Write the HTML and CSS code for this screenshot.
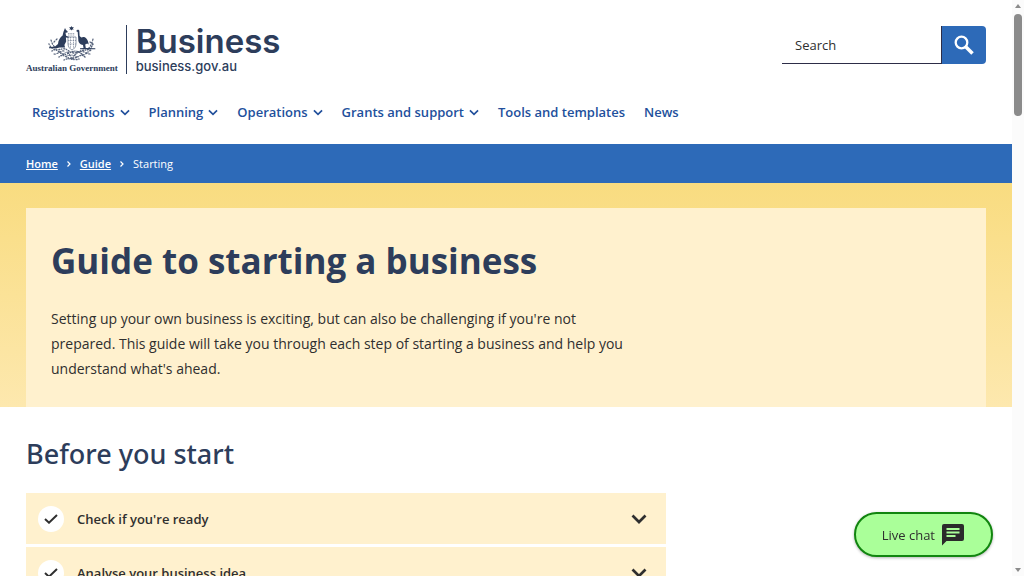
FILE: index.html
```html
<!DOCTYPE html>
<html lang="en">
<head>
    <meta charset="UTF-8">
    <meta name="viewport" content="width=device-width, initial-scale=1.0">
    <title>Guide to starting a business | business.gov.au</title>
    <link rel="stylesheet" href="styles.css">
</head>
<body>

    <!-- Shared icons -->
    <svg class="sprite" aria-hidden="true">
        <symbol id="chevron" viewBox="0 0 16 10">
            <path d="M1.500 1.500L8 8l6.500-6.500" fill="none" stroke="currentColor" stroke-width="2.700"/>
        </symbol>
        <symbol id="tick" viewBox="0 0 14 10">
            <path d="M1 5l4 3.700L13 1" fill="none" stroke="currentColor" stroke-width="2"/>
        </symbol>
    </svg>

    <div class="page">
        <div class="content">
            <header class="header">
                <div class="header-top">
                    <a class="logo" href="#">
                        <span class="crest">
                            <svg width="48" height="36" viewBox="0 0 48 36" aria-hidden="true">
                                <!-- star -->
                                <path d="M23.500 1l.7 1.300 1.600-.2-.9 1.300.9 1.200-1.600-.2-.7 1.200-.7-1.200-1.600.2.9-1.200-.9-1.300 1.600.2z"/>
                                <!-- kangaroo -->
                                <path d="M17 3l1 2 1.600 1.300-.2 1.200-1.900.3.600 3 2.600 1-.2.900-2.600-.2.300 4-1.800 3.500.7 2.500h-5.500l-3 .8H1v-1l6-.8 3-2.500c.3-4 2.200-6.500 4.600-8.500l.8-3.500z"/>
                                <!-- emu -->
                                <path d="M28 6l2-1.500 1.300 1 .3 5.500 1.700 1.500c3-1.800 6.700.5 7.400 7l-1.500-1-2 1 .6 3.500 9.500.3v1H32v-1l3.500-.3-.5-3c-2.500-.3-5-2.500-4.700-5.500l-.6-7.500z"/>
                                <!-- shield -->
                                <g fill="none" stroke="currentColor" opacity=".75">
                                    <path d="M20 12h8v7c0 3-2 5-4 6-2-1-4-3-4-6z" stroke-width=".7"/>
                                    <path d="M22.500 12v11M25.500 12v11M20 15.500h8M20 19h8M20 8.500h7M20 10h7" stroke-width=".6" stroke-dasharray="1.500 .8"/>
                                </g>
                                <!-- wattle -->
                                <g fill="none" stroke="currentColor" stroke-linecap="round" opacity=".8">
                                    <path d="M1 19c2 5 7 7 13 5s8 7 16 3 11 1 15-8M4 26c5-5 8 6 15 3s9-5 16 1c4-1 6-5 9-5M11 32c5-5 9 4 16 1s6-4 10-1M16 35c5-3 10 1 15-1" stroke-width="1.400" stroke-dasharray=".3 2 1 1.700"/>
                                    <path d="M3 15c1 3 2 6 5 8M45 14c-1 4-2 7-5 10M6 29c3 1 7-4 10-3M42 29c-4 0-6-4-11-2M20 27l4 7 5-7M9 14l-3 3M42 17l3 2" stroke-width="1.200" stroke-dasharray="1.300 1.800"/>
                                    <path d="M12 27l3 2 4-2 3 3M27 30l4-3 4 3M18 31l6-1 6 2" stroke-width=".7"/>
                                </g>
                            </svg>
                            <span class="crest-name">Australian Government</span>
                        </span>
                        <span class="brand">
                            <span class="brand-name">Business</span>
                            <span class="brand-url">business.gov.au</span>
                        </span>
                    </a>
                    <form class="search">
                        <input type="text" name="search" placeholder="Search" aria-label="Search">
                        <button type="submit" aria-label="Search">
                            <svg width="20" height="20" viewBox="0 0 20 20" aria-hidden="true">
                                <circle cx="7.500" cy="7.500" r="5.800" fill="none" stroke="currentColor" stroke-width="2.300"/>
                                <path d="M12 12l6.500 6.500" stroke="currentColor" stroke-width="3.500"/>
                            </svg>
                        </button>
                    </form>
                </div>
                <nav class="main-nav">
                    <a href="#">Registrations <svg><use href="#chevron"/></svg></a>
                    <a href="#">Planning <svg><use href="#chevron"/></svg></a>
                    <a href="#">Operations <svg><use href="#chevron"/></svg></a>
                    <a href="#">Grants and support <svg><use href="#chevron"/></svg></a>
                    <a href="#">Tools and templates</a>
                    <a href="#">News</a>
                </nav>
            </header>

            <nav class="breadcrumb" aria-label="Breadcrumb">
                <a href="#">Home</a>
                <svg width="4" height="6" viewBox="0 0 4 6" aria-hidden="true"><path d="M.5.500L3 3 .5 5.500" fill="none" stroke="currentColor" stroke-width="1.200"/></svg>
                <a href="#">Guide</a>
                <svg width="4" height="6" viewBox="0 0 4 6" aria-hidden="true"><path d="M.5.500L3 3 .5 5.500" fill="none" stroke="currentColor" stroke-width="1.200"/></svg>
                <span>Starting</span>
            </nav>

            <section class="hero">
                <div class="hero-card">
                    <h1>Guide to starting a business</h1>
                    <p>Setting up your own business is exciting, but can also be challenging if you're not prepared. This guide will take you through each step of starting a business and help you understand what's ahead.</p>
                </div>
            </section>

            <main class="main">
                <h2>Before you start</h2>
                <div class="accordion">
                    <button type="button" class="accordion-item">
                        <span class="tick"><svg><use href="#tick"/></svg></span>
                        <span class="accordion-title">Check if you're ready</span>
                        <svg class="arrow"><use href="#chevron"/></svg>
                    </button>
                    <button type="button" class="accordion-item">
                        <span class="tick"><svg><use href="#tick"/></svg></span>
                        <span class="accordion-title">Analyse your business idea</span>
                        <svg class="arrow"><use href="#chevron"/></svg>
                    </button>
                </div>
            </main>
        </div>

        <div class="scrollbar" aria-hidden="true">
            <span class="scroll-up"></span>
            <span class="scroll-thumb"></span>
            <span class="scroll-down"></span>
        </div>
    </div>

    <button type="button" class="live-chat">
        Live chat
        <svg width="22" height="22" viewBox="0 0 22 22" aria-hidden="true">
            <path d="M2 0h18a2 2 0 0 1 2 2v13a2 2 0 0 1-2 2H4.500L0 21.500V2a2 2 0 0 1 2-2z" fill="#2b2b2b"/>
            <path d="M4.500 5h13M4.500 8.500h13M4.500 12h9" stroke="#aaff99" stroke-width="2"/>
        </svg>
    </button>

</body>
</html>
```
FILE: styles.css
```css
* {
    box-sizing: border-box;
}
body {
    margin: 0;
    font-family: "Open Sans", sans-serif;
    color: #2f2f2f;
    background-color: white;
}
button, input {
    font-family: inherit;
    color: inherit;
}
button {
    cursor: pointer;
}
.sprite {
    display: none;
}
.page {
    display: grid;
    grid-template-columns: 1fr 12px;
    height: 100vh;
    overflow: hidden;
}
.content {
    overflow: hidden;
}

/* Header */
.header {
    padding: 25px 26px 22px;
}
.header-top {
    display: flex;
    justify-content: space-between;
    align-items: flex-start;
}
.logo {
    display: flex;
    color: #2d3d5b;
    text-decoration: none;
}
.crest {
    display: flex;
    flex-direction: column;
    align-items: center;
    gap: 1px;
    padding-right: 8px;
    border-right: 1px solid #2d3d5b;
}
.crest svg {
    fill: currentColor;
}
.crest-name {
    font: bold 9px/12px "Liberation Serif", serif;
    white-space: nowrap;
}
.brand {
    display: flex;
    flex-direction: column;
    padding-left: 9px;
    font-family: Inter, sans-serif;
}
.brand-name {
    font-size: 33px;
    font-weight: 600;
    line-height: 33px;
}
.brand-url {
    font-size: 13px;
    font-weight: 500;
    line-height: 16px;
}
.search {
    display: flex;
    width: 204px;
    height: 38px;
    margin-top: 1px;
}
.search input {
    flex: 1;
    min-width: 0;
    padding: 0 13px;
    border: none;
    border-bottom: 1px solid #2d2d48;
    border-radius: 0;
    font-size: 13px;
}
.search input::placeholder {
    color: #2f2f2f;
}
.search button {
    display: flex;
    align-items: center;
    justify-content: center;
    width: 45px;
    border: none;
    border-left: 1px solid #2d2d48;
    border-radius: 0 4px 4px 0;
    background-color: #2d6ab8;
    color: white;
}
.main-nav {
    display: flex;
    gap: 19px;
    margin-top: 28px;
    padding-left: 6px;
}
.main-nav a {
    display: flex;
    align-items: center;
    gap: 5px;
    color: #22509c;
    font-size: 13px;
    font-weight: 600;
    line-height: 20px;
    text-decoration: none;
}
.main-nav svg {
    width: 10px;
    height: 7px;
}

/* Breadcrumb */
.breadcrumb {
    display: flex;
    align-items: center;
    gap: 9px;
    height: 39px;
    padding: 0 26px;
    background-color: #2d6ab8;
    color: white;
    font-size: 11px;
}
.breadcrumb a {
    color: white;
    font-weight: 600;
}

/* Hero */
.hero {
    padding: 25px 26px 0;
    background: linear-gradient(#f9dc80, #fde8ae);
}
.hero-card {
    padding: 28px 25px 26px;
    background-color: #fff1ce;
}
h1 {
    margin: 0 0 20px;
    color: #2d3d5b;
    font-size: 35px;
    line-height: 50px;
}
.hero-card p {
    max-width: 590px;
    margin: 0;
    font-size: 14px;
    line-height: 25px;
}

/* Guide steps */
.main {
    padding: 27px 26px;
}
h2 {
    margin: 0 0 19px;
    color: #2d3d5b;
    font-family: "Noto Sans", "Open Sans", sans-serif;
    font-size: 27px;
    font-weight: 500;
    line-height: 40px;
}
.accordion {
    display: flex;
    flex-direction: column;
    gap: 3px;
    max-width: 640px;
}
.accordion-item {
    display: flex;
    align-items: center;
    gap: 13px;
    height: 51px;
    padding: 0 19px 0 12px;
    border: none;
    background-color: #fff1ce;
    text-align: left;
}
.tick {
    display: flex;
    align-items: center;
    justify-content: center;
    width: 26px;
    height: 26px;
    border-radius: 50%;
    background-color: white;
}
.tick svg {
    width: 14px;
    height: 10px;
}
.accordion-title {
    flex: 1;
    font-size: 13px;
    font-weight: 600;
}
.arrow {
    width: 16px;
    height: 10px;
}

/* Live chat */
.live-chat {
    position: fixed;
    right: 31px;
    bottom: 19px;
    display: flex;
    align-items: center;
    gap: 7px;
    height: 45px;
    padding: 0 27px 0 26px;
    border: 2px solid #11850f;
    border-radius: 23px;
    background-color: #aaff99;
    box-shadow: 0 1px 3px rgba(0, 0, 0, 0.3);
    font-size: 13px;
}

/* Scrollbar */
.scrollbar {
    display: flex;
    flex-direction: column;
    align-items: center;
    padding: 4px 2px;
    background-color: #fbfbfb;
}
.scroll-up, .scroll-down {
    border: 3px solid transparent;
}
.scroll-up {
    border-top: none;
    border-bottom: 4px solid #8b8b8b;
}
.scroll-down {
    margin-top: auto;
    border-bottom: none;
    border-top: 4px solid #8b8b8b;
}
.scroll-thumb {
    width: 8px;
    height: 18%;
    margin-top: 6px;
    border-radius: 4px;
    background-color: #8b8b8b;
}
```
